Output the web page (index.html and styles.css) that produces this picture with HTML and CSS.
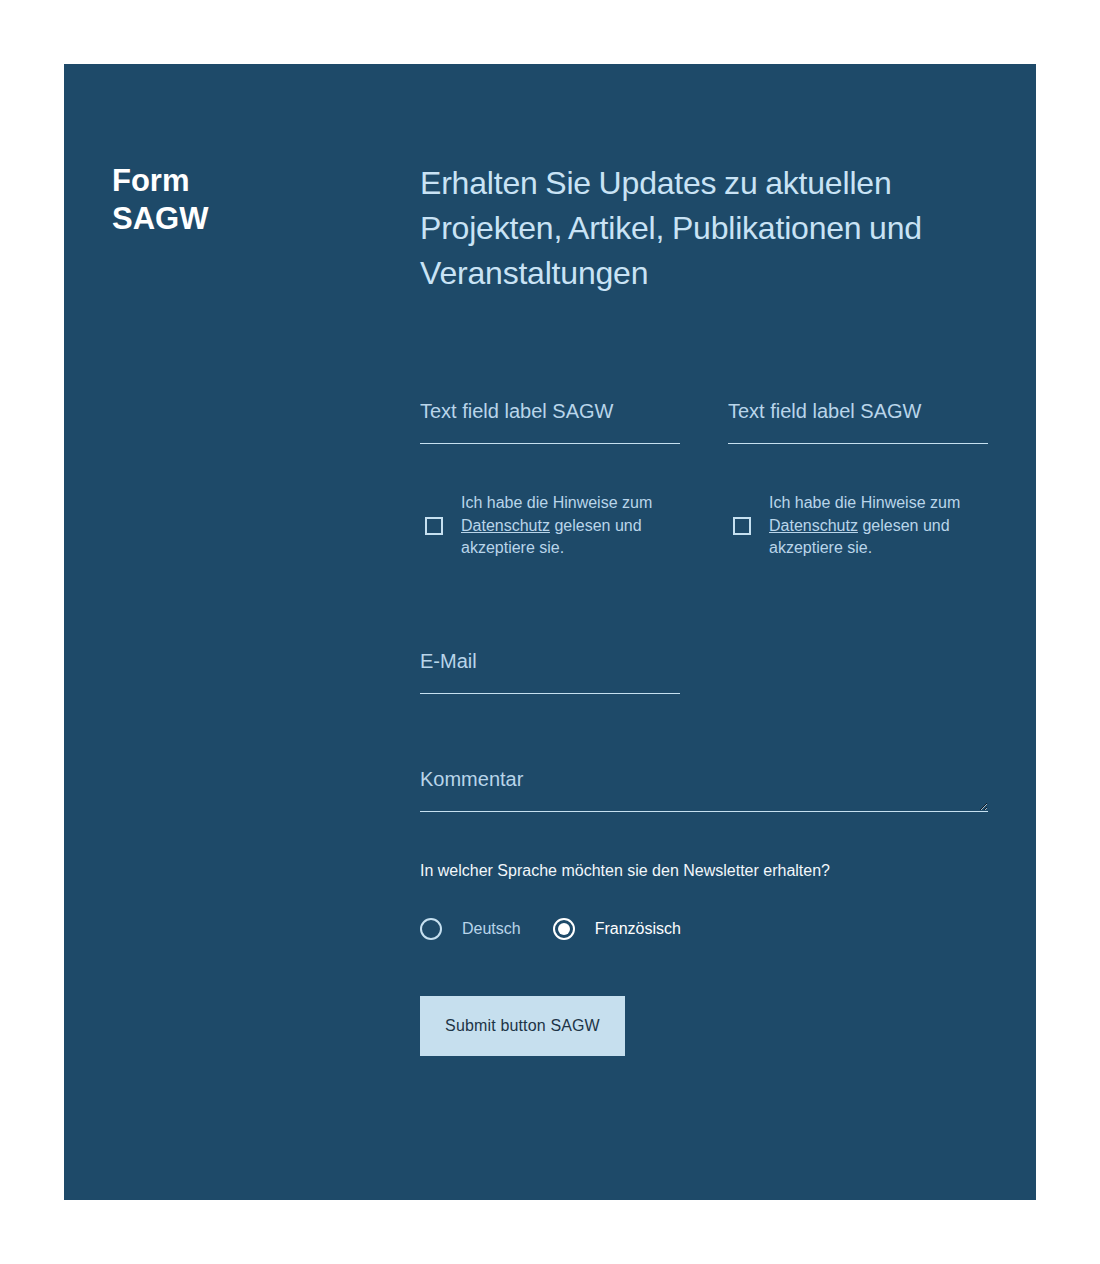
FILE: index.html
```html
<!DOCTYPE html>
<html lang="de">
<head>
<meta charset="utf-8">
<title>Form SAGW</title>
<link rel="stylesheet" href="styles.css">
</head>
<body>
<div class="page">
  <section class="panel">
    <h2 class="title">Form<br>SAGW</h2>
    <div class="content">
      <p class="lead">Erhalten Sie Updates zu aktuellen Projekten, Artikel, Publikationen und Veranstaltungen</p>
      <form class="form">
        <div class="row">
          <input class="field" type="text" placeholder="Text field label SAGW">
          <input class="field" type="text" placeholder="Text field label SAGW">
        </div>
        <div class="row checks">
          <label class="check">
            <span class="box"></span>
            <span class="check-text">Ich habe die Hinweise zum <a href="#">Datenschutz</a> gelesen und akzeptiere sie.</span>
          </label>
          <label class="check">
            <span class="box"></span>
            <span class="check-text">Ich habe die Hinweise zum <a href="#">Datenschutz</a> gelesen und akzeptiere sie.</span>
          </label>
        </div>
        <div class="row email-row">
          <input class="field email" type="email" placeholder="E-Mail">
        </div>
        <textarea class="field comment" rows="1" placeholder="Kommentar"></textarea>
        <p class="question">In welcher Sprache möchten sie den Newsletter erhalten?</p>
        <div class="radios">
          <label class="radio"><span class="dot"></span><span class="radio-label">Deutsch</span></label>
          <label class="radio checked"><span class="dot"></span><span class="radio-label">Französisch</span></label>
        </div>
        <button class="submit" type="button">Submit button SAGW</button>
      </form>
    </div>
  </section>
</div>
</body>
</html>
```

FILE: styles.css
```css
* { box-sizing: border-box; }

html, body {
  margin: 0;
  padding: 0;
  background: #ffffff;
}

body {
  font-family: "Liberation Sans", Arial, sans-serif;
}

.page {
  padding: 64px;
}

.panel {
  background: #1e4a69;
  padding: 96px 48px 144px;
  display: grid;
  grid-template-columns: 260px 568px;
  column-gap: 48px;
  align-items: start;
}

.title {
  margin: 2px 0 0;
  color: #ffffff;
  font-size: 31px;
  line-height: 38px;
  font-weight: 700;
}

.lead {
  margin: 1px 0 0;
  color: #c9e3f5;
  font-size: 32px;
  line-height: 45px;
  letter-spacing: -0.2px;
  word-spacing: -1px;
}

.form {
  margin-top: 103px;
  display: flex;
  flex-direction: column;
}

.row {
  display: grid;
  grid-template-columns: 260px 260px;
  column-gap: 48px;
}

.field {
  display: block;
  width: 100%;
  height: 45px;
  margin: 0;
  padding: 0 0 20px 0;
  background: transparent;
  border: 0;
  border-bottom: 1px solid #c6e0f0;
  border-radius: 0;
  color: #ffffff;
  font-family: "Liberation Sans", Arial, sans-serif;
  font-size: 20px;
  line-height: 24px;
  outline: none;
}

.field::placeholder {
  color: #b9d5ea;
  opacity: 1;
}

.checks {
  margin-top: 47px;
}

.check {
  display: flex;
  align-items: center;
  color: #b9d5ea;
  font-size: 16px;
  line-height: 22.6px;
}

.box {
  flex: none;
  width: 18px;
  height: 18px;
  margin: 2px 18px 0 5px;
  border: 2px solid #c6e0f0;
}

.check-text {
  padding-top: 1px;
}

.check-text a {
  color: #b9d5ea;
  text-decoration: underline;
}

.email-row {
  margin-top: 90px;
}

.field.email {
  height: 44px;
  padding-bottom: 19px;
}

.comment {
  margin-top: 73px;
  resize: vertical;
  overflow: hidden;
}

.question {
  margin: 48px 0 0;
  color: #f2f7fb;
  font-size: 16px;
  line-height: 22.4px;
}

.radios {
  margin-top: 36px;
  display: flex;
  align-items: center;
  gap: 32px;
}

.radio {
  display: flex;
  align-items: center;
  gap: 20px;
  color: #b9d5ea;
  font-size: 16px;
  line-height: 22px;
}

.dot {
  width: 22px;
  height: 22px;
  border-radius: 50%;
  border: 2px solid #c6e0f0;
  position: relative;
}

.radio.checked {
  color: #ffffff;
}

.radio.checked .dot {
  border-color: #ffffff;
}

.radio.checked .dot::after {
  content: "";
  position: absolute;
  left: 3px;
  top: 3px;
  width: 12px;
  height: 12px;
  border-radius: 50%;
  background: #ffffff;
}

.submit {
  align-self: flex-start;
  margin-top: 56px;
  width: 205px;
  height: 60px;
  padding: 0;
  background: #c6dfee;
  border: 0;
  border-radius: 0;
  color: #1d3447;
  font-family: "Liberation Sans", Arial, sans-serif;
  font-size: 16px;
  line-height: 22px;
  letter-spacing: 0.15px;
  text-align: center;
  cursor: pointer;
}
```
